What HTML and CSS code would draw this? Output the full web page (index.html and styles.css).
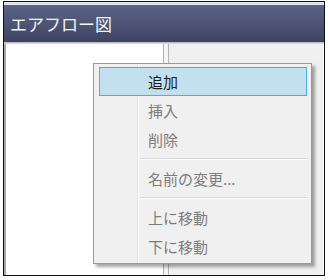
FILE: index.html
```html
<!DOCTYPE html>
<html lang="ja">
<head>
  <meta charset="UTF-8">
  <meta name="viewport" content="width=device-width, initial-scale=1.0">
  <title>エアフロー図</title>
  <link rel="stylesheet" href="styles.css">
</head>
<body>
  <div class="janela">
    <div class="faixa"></div>
    <div class="titulo">エアフロー図</div>
    <div class="linha-titulo"></div>
    <div class="conteudo">
      <div class="painel-esq"></div>
      <div class="divisor"></div>
      <div class="painel-dir"></div>
    </div>

    <ul class="menu">
      <li class="item ativo">追加</li>
      <li class="item">挿入</li>
      <li class="item">削除</li>
      <li class="sep"></li>
      <li class="item">名前の変更...</li>
      <li class="sep"></li>
      <li class="item">上に移動</li>
      <li class="item">下に移動</li>
    </ul>
  </div>
</body>
</html>
```

FILE: styles.css
```css
body {
  margin: 0;
  background: #fff;
  font-family: "Noto Sans CJK JP", "Noto Sans", sans-serif;
}
.janela {
  position: relative;
  margin: 1px 0 0 3px;
  width: 320px;
  height: 273px;
  border: 1px solid #111;
  display: flex;
  flex-direction: column;
  background: #f0f0f0;
}
.faixa {
  height: 3px;
  background: #dfe3ea;
}
.titulo {
  height: 37px;
  background: linear-gradient(#5b6387, #4c5373 55%, #3d4261);
  color: #f4f4f4;
  font-size: 17px;
  line-height: 37px;
  padding-left: 6px;
}
.linha-titulo {
  height: 2px;
  background: linear-gradient(#aeb2bd, #e4e4e4);
}
.conteudo {
  flex: 1;
  display: flex;
}
.painel-esq {
  width: 157px;
  background: #fff;
  border-left: 2px solid #a6a6a6;
}
.divisor {
  width: 4px;
  border-left: 1px solid #b3b3b3;
  border-right: 1px solid #b3b3b3;
  background: #f4f4f4;
}
.painel-dir {
  flex: 1;
  background: #f0f0f0;
  border-right: 1px solid #fff;
}
.menu {
  position: absolute;
  left: 89px;
  top: 61px;
  width: 208px;
  margin: 0;
  padding: 3px 4px 2px 5px;
  list-style: none;
  border: 1px solid #999;
  background: linear-gradient(90deg, #f0f0f0 43px, #e2e3e3 43px, #e2e3e3 44px, #fff 44px, #fff 45px, #f0f0f0 45px);
  box-shadow: 3px 3px 3px rgba(0,0,0,0.35);
}
.item {
  height: 27px;
  line-height: 27px;
  border: 1px solid transparent;
  padding-left: 48px;
  font-size: 15px;
  color: #7d7d7d;
}
.item.ativo {
  background: rgba(190, 222, 238, 0.9);
  border-color: #45b0e4;
  color: #1c1c1c;
}
.sep {
  height: 10px;
  margin-left: 41px;
  background: linear-gradient(transparent 4px, #d7d7d7 4px, #d7d7d7 5px, #fff 5px, #fff 6px, transparent 6px);
}
```
